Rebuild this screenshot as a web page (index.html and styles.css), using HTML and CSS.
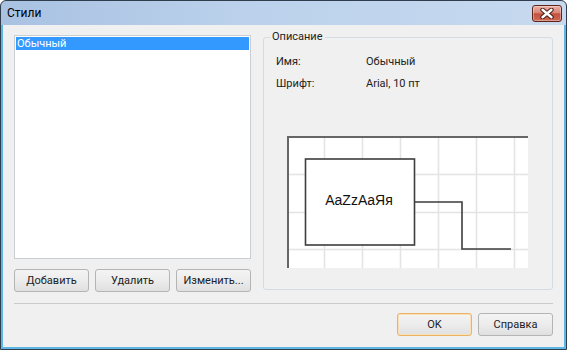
FILE: index.html
```html
<!DOCTYPE html>
<html lang="ru">
<head>
    <meta charset="UTF-8">
    <title>Стили</title>
    <link rel="stylesheet" href="styles.css">
</head>
<body>
    <div class="window">
        <div class="titlebar">
            <span class="title">Стили</span>
            <button class="close-btn" title="Закрыть">
                <svg width="16" height="11" viewBox="0 0 16 11">
                    <path d="M3.5 1.8L12.5 9.2M12.5 1.8L3.5 9.2" stroke="#4a1c15" stroke-width="4.4" stroke-linecap="round"/>
                    <path d="M3.5 1.8L12.5 9.2M12.5 1.8L3.5 9.2" stroke="#fff" stroke-width="2.4" stroke-linecap="round"/>
                </svg>
            </button>
        </div>

        <div class="content">
            <div class="main">
                <div class="styles-col">
                    <ul class="style-list">
                        <li class="selected">Обычный</li>
                    </ul>
                    <div class="list-buttons">
                        <button class="btn">Добавить</button>
                        <button class="btn">Удалить</button>
                        <button class="btn">Изменить...</button>
                    </div>
                </div>

                <fieldset class="description">
                    <legend>Описание</legend>
                    <dl class="props">
                        <dt>Имя:</dt>
                        <dd>Обычный</dd>
                        <dt>Шрифт:</dt>
                        <dd>Arial, 10 пт</dd>
                    </dl>

                    <!-- style preview -->
                    <svg class="preview" width="241" height="132" viewBox="0 0 241 132">
                        <rect width="241" height="132" fill="#fff"/>
                        <path d="M37.5 0V132M75.5 0V132M113.5 0V132M151.5 0V132M189.5 0V132M227.5 0V132M0 38.5H241M0 76.5H241M0 113.5H241"
                              stroke="#e4e4e4" stroke-width="1.6" fill="none"/>
                        <path d="M1 132V1H241" stroke="#666" stroke-width="2" fill="none"/>
                        <rect x="18.5" y="23" width="109" height="86" fill="#fff" stroke="#3c3c3c" stroke-width="1.6"/>
                        <text x="72" y="69" text-anchor="middle" class="preview-text">AaZzAaЯя</text>
                        <path d="M127.5 66H175V113H224" stroke="#3c3c3c" stroke-width="1.6" fill="none"/>
                    </svg>
                </fieldset>
            </div>

            <hr class="separator">

            <div class="dialog-buttons">
                <button class="btn btn-default">OK</button>
                <button class="btn">Справка</button>
            </div>
        </div>
    </div>
</body>
</html>
```

FILE: styles.css
```css
* {
    box-sizing: border-box;
    margin: 0;
    padding: 0;
}

body {
    font-family: Roboto, 'Noto Sans', sans-serif;
    font-size: 11px;
    color: #222;
    background: #fff;
}

.window {
    width: 567px;
    height: 350px;
    display: flex;
    flex-direction: column;
    border: 1px solid #2f3d4c;
    border-radius: 6px 6px 0 0;
    background: linear-gradient(90deg, #a9c2e2 0%, #bcd2ec 45%, #c6d9ef 100%);
    overflow: hidden;
}

.titlebar {
    height: 24px;
    display: flex;
    align-items: flex-start;
    justify-content: space-between;
    padding: 0 4px 0 6px;
}

.title {
    line-height: 24px;
    font-size: 12px;
    color: #000;
}

.close-btn {
    width: 30px;
    height: 17px;
    margin-top: 4px;
    display: flex;
    align-items: center;
    justify-content: center;
    border: 1px solid #5e2419;
    border-radius: 3px;
    background: linear-gradient(180deg, #eab0a4 0%, #d98676 45%, #c5503d 52%, #cd6a55 100%);
    box-shadow: inset 0 0 0 1px rgba(255, 255, 255, 0.35);
}

.content {
    flex: 1;
    background: #f0f0f0;
    border: 2px solid #5db6e4;
    border-top: none;
    padding: 10px 11px 0 11px;
}

.main {
    display: flex;
    align-items: flex-start;
    gap: 12px;
}

.styles-col {
    width: 237px;
    flex-shrink: 0;
}

.style-list {
    list-style: none;
    height: 224px;
    background: #fff;
    border: 1px solid #c9ced3;
    padding: 1px;
}

.style-list li {
    line-height: 13px;
    height: 13px;
    padding-left: 1px;
}

.style-list li.selected {
    background: #3399ff;
    color: #fff;
}

.list-buttons {
    display: flex;
    justify-content: space-between;
    margin-top: 10px;
}

.btn {
    width: 75px;
    height: 23px;
    font-family: inherit;
    font-size: 11px;
    color: #222;
    border: 1px solid #b4b4b4;
    border-radius: 3px;
    background: linear-gradient(180deg, #f4f4f4 0%, #ececec 50%, #e0e0e0 100%);
}

.btn-default {
    border-color: #e9b468;
    box-shadow: inset 0 0 0 1px #fbe0b4;
}

.description {
    flex: 1;
    height: 260px;
    margin-top: -5px;
    border: 1px solid #d3dce3;
    border-radius: 3px;
    padding: 0;
}

.description legend {
    margin-left: 6px;
    padding: 0 2px;
    line-height: 14px;
}

.props {
    display: grid;
    grid-template-columns: 90px auto;
    row-gap: 8px;
    line-height: 14px;
    margin: 11px 0 0 12px;
}

.props dd {
    margin: 0;
}

.preview {
    display: block;
    margin: 45px 0 0 23px;
}

.preview-text {
    font-family: 'Liberation Sans', Arial, sans-serif;
    font-size: 14px;
    fill: #111;
}

.separator {
    border: none;
    border-top: 1px solid #cacaca;
    margin-top: 11px;
}

.dialog-buttons {
    display: flex;
    justify-content: flex-end;
    gap: 6px;
    margin-top: 9px;
}
```
